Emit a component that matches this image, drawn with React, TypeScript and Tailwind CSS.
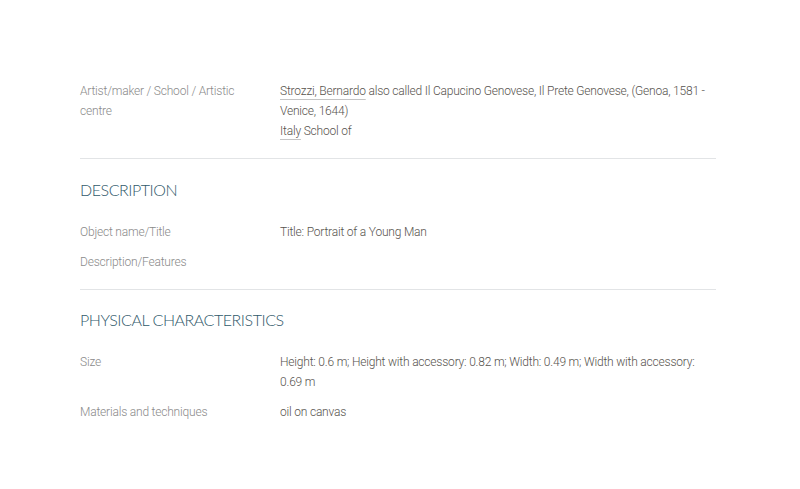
const rowCls = 'flex text-[12px] leading-5 tracking-[-0.2px]';
const labelCls = 'w-[200px] shrink-0 pr-4 text-[#8a8a8a]';
const valueCls = 'flex-1 text-[#57534e]';
const linkCls = 'underline decoration-[#c4c4c4] decoration-1 underline-offset-[4px]';

function Row({ label, children, last }: { label: string; children?: React.ReactNode; last?: boolean }) {
  return (
    <div className={`${rowCls} ${last ? '' : 'mb-2.5'}`}>
      <div className={labelCls}>{label}</div>
      <div className={valueCls}>{children}</div>
    </div>
  );
}

function Heading({ children }: { children: React.ReactNode }) {
  return (
    <h2 className="mb-5 text-[16px] leading-6 uppercase tracking-[-0.45px] text-[#30596a] font-['Lato',sans-serif]">
      {children}
    </h2>
  );
}

export default function App() {
  return (
    <div className="min-h-[489px] bg-white font-['Roboto',sans-serif] font-light">
      <div className="mx-[80px] w-[636px] pt-[81px]">
        <Row label="Artist/maker / School / Artistic centre" last>
          <span className={linkCls}>Strozzi, Bernardo</span> also called Il Capucino Genovese, Il Prete Genovese, (Genoa, 1581 - Venice, 1644)
          <br />
          <span className={linkCls}>Italy</span> School of
        </Row>

        <hr className="mt-[17px] mb-[19px] border-0 h-px bg-[#e2e4e6]" />

        <Heading>Description</Heading>
        <Row label="Object name/Title">Title: Portrait of a Young Man</Row>
        <Row label="Description/Features" last />

        <hr className="mt-[17px] mb-[18px] border-0 h-px bg-[#e2e4e6]" />

        <Heading>Physical characteristics</Heading>
        <Row label="Size">
          Height: 0.6 m; Height with accessory: 0.82 m; Width: 0.49 m; Width with accessory: 0.69 m
        </Row>
        <Row label="Materials and techniques" last>oil on canvas</Row>
      </div>
    </div>
  );
}
